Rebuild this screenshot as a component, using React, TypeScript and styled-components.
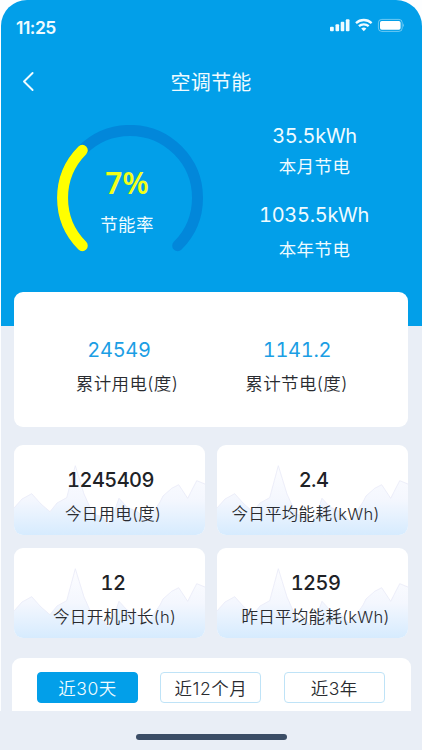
import React from "react";
import styled, { createGlobalStyle } from "styled-components";

const GlobalStyle = createGlobalStyle`
  *, *::before, *::after { box-sizing: border-box; }
  body { margin: 0; background: #fff; overflow: hidden; }
`;

const Screen = styled.div`
  width: 422px;
  height: 750px;
  overflow: hidden;
  display: flex;
  flex-direction: column;
  background: #fdfeff;
  font-family: Inter, "Noto Sans CJK SC", sans-serif;
`;

const Content = styled.main`
  height: 711px;
  margin-left: 1px;
  padding: 0 14px 0 13px;
  overflow: hidden;
  border-radius: 26px 26px 0 0;
  background: linear-gradient(#029fe9 326px, #e9eef6 326px);
`;

const StatusBar = styled.div`
  height: 52px;
  padding: 17px 4px 0 2px;
  display: flex;
  justify-content: space-between;
`;

const Clock = styled.span`
  font: 600 17.5px/21px Inter, sans-serif;
  letter-spacing: -0.5px;
  color: #effbff;
`;

const StatusIcons = styled.svg`
  display: block;
  width: 76px;
  height: 16px;
`;

const NavBar = styled.header`
  height: 60px;
  display: grid;
  grid-template-columns: 28px 1fr 28px;
  align-items: center;
`;

const BackButton = styled.button`
  width: 28px;
  height: 28px;
  padding: 0;
  border: 0;
  background: none;
`;

const Title = styled.h1`
  margin: 2px 0 0;
  text-align: center;
  font-size: 20px;
  line-height: 28px;
  font-weight: 400;
  letter-spacing: 0.3px;
  color: #effbff;
`;

const Hero = styled.section`
  height: 180px;
  display: flex;
`;

const Gauge = styled.div`
  display: grid;
  width: 146px;
  height: 146px;
  margin: 13px 0 0 43px;
  > * { grid-area: 1 / 1; }
`;

const GaugeText = styled.div`
  display: flex;
  flex-direction: column;
  align-items: center;
  padding: 38px 6px 0 0;
`;

const Percent = styled.strong`
  font: 600 30px/40px "Noto Sans", sans-serif;
  color: #f2ff18;
`;

const Savings = styled.div`
  display: flex;
  flex-direction: column;
  align-items: center;
  width: 150px;
  margin-left: 36px;
  padding-top: 10px;
`;

const Caption = styled.span<{ $size?: number; $light?: boolean; $gap?: number; $spacing?: number; $shift?: number }>`
  display: block;
  margin-top: ${(p) => p.$gap ?? 0}px;
  margin-left: ${(p) => (p.$shift ?? 0) * 2}px;
  font-size: ${(p) => p.$size ?? 17.5}px;
  line-height: 26px;
  letter-spacing: ${(p) => p.$spacing ?? 0.4}px;
  color: ${(p) => (p.$light ? "#effbff" : "#292b30")};
  font-weight: ${(p) => (p.$light ? 400 : 350)};
  white-space: nowrap;
`;

const Value = styled.span<{ $color?: string; $strong?: boolean; $gap?: number; $shift?: number }>`
  display: block;
  margin-top: ${(p) => p.$gap ?? 0}px;
  margin-left: ${(p) => (p.$shift ?? 0) * 2}px;
  font-size: 20px;
  line-height: 26px;
  letter-spacing: ${(p) => (p.$strong ? -0.55 : -0.3)}px;
  font-variant-numeric: tabular-nums;
  font-weight: ${(p) => (p.$strong ? 500 : 400)};
  color: ${(p) => p.$color ?? "#202226"};
  white-space: nowrap;
`;

const TotalsCard = styled.section`
  height: 135px;
  padding: 45px 28px 0 20px;
  display: grid;
  grid-template-columns: 1fr 1fr;
  border-radius: 9px;
  background: #fff;
`;

const Stat = styled.div`
  display: flex;
  flex-direction: column;
  align-items: center;
`;

const MetricGrid = styled.section`
  display: grid;
  grid-template-columns: 191px 191px;
  grid-auto-rows: 90px;
  gap: 13px 12px;
  margin-top: 18px;
`;

const MetricCard = styled.article`
  display: grid;
  overflow: hidden;
  border-radius: 9px;
  background: #fff;
  > * { grid-area: 1 / 1; }
`;

const MetricText = styled(Stat)`
  padding-top: 22px;
`;

const RangePanel = styled.nav`
  display: grid;
  grid-template-columns: repeat(3, 101px);
  gap: 22.4px;
  height: 60px;
  margin: 20px -3px 0 -2px;
  padding: 14px 0 0 25px;
  border-radius: 9px 9px 0 0;
  background: #fff;
`;

const RangeButton = styled.button<{ $active?: boolean }>`
  height: 31px;
  padding: 2px 0 0;
  border: 1px solid ${(p) => (p.$active ? "#029fe9" : "#bfe3f7")};
  border-radius: 4px;
  background: ${(p) => (p.$active ? "#029fe9" : "#fff")};
  color: ${(p) => (p.$active ? "#effbff" : "#292b30")};
  font: 350 17.5px/26px Inter, "Noto Sans CJK SC", sans-serif;
  letter-spacing: 0.5px;
  white-space: nowrap;
`;

const HomeArea = styled.footer`
  flex: 1;
  display: flex;
  justify-content: center;
  padding-top: 23px;
  background: #e9eef6;
`;

const HomeIndicator = styled.div`
  width: 151px;
  height: 6px;
  border-radius: 3px;
  background: #3b4d66;
`;

const WAVE =
  "M0 63 L8 54 L17.7 48.7 L27 59 L36 66.7 L43 58 L52.7 52.7 L61.3 20.7 L70 49 L79 69 L89 72 L94 79 L99 70 L105 53.3 L113 62 L124 67 L133 76 L146 57 L149 51 L157.7 43.3 L164.7 39.7 L173.7 53.3 L182.7 35.7 L191 39";

function Wave({ id }: { id: string }) {
  return (
    <svg width="191" height="90" aria-hidden="true">
      <defs>
        <linearGradient id={id} x1="0" y1="20" x2="0" y2="90" gradientUnits="userSpaceOnUse">
          <stop offset="0" stopColor="#fdfdff" />
          <stop offset="0.5" stopColor="#f4f7fe" />
          <stop offset="1" stopColor="#d6ebfe" />
        </linearGradient>
      </defs>
      <path d={`${WAVE} V90 H0 Z`} fill={`url(#${id})`} />
      <path d={WAVE} fill="none" stroke="#e8eaf7" strokeWidth="0.8" />
    </svg>
  );
}

const METRICS = [
  { id: "today", value: "1245409", label: "今日用电(度)", valueShift: 1, labelShift: 3.5 },
  { id: "average", value: "2.4", label: "今日平均能耗(kWh)", valueShift: 1, labelShift: -7 },
  { id: "hours", value: "12", label: "今日开机时长(h)", valueShift: 3.5, labelShift: 5 },
  { id: "yesterday", value: "1259", label: "昨日平均能耗(kWh)", valueShift: 3, labelShift: 3 },
];

const PALE = "#effbff";

export default function App() {
  return (
    <Screen>
      <GlobalStyle />
      <Content>
        <StatusBar>
          <Clock>11:25</Clock>
          <StatusIcons viewBox="0 0 76 16" fill="none">
            <g fill={PALE}>
              <rect x="2" y="9.7" width="3.8" height="4.5" rx="1" />
              <rect x="7.5" y="7.2" width="3.6" height="7" rx="1" />
              <rect x="12.7" y="4.8" width="3.6" height="9.4" rx="1" />
              <rect x="17.8" y="2.2" width="3.7" height="12" rx="1" />
            </g>
            <g stroke={PALE} strokeWidth="2.3">
              <path d="M28 6.1a11.4 11.4 0 0 1 15.6 0" />
              <path d="M30.9 9.2a7.2 7.2 0 0 1 9.8 0" />
            </g>
            <path d="M33.2 11.6a3.9 3.9 0 0 1 5.2 0L35.8 14.3Z" fill={PALE} />
            <rect x="50.4" y="2.4" width="23.8" height="12" rx="3.3" stroke={PALE} strokeOpacity="0.45" />
            <rect x="52" y="4" width="20.6" height="8.7" rx="1.8" fill="#fff" />
            <path d="M75 6.3q1.4 2 0 4z" fill={PALE} opacity="0.55" />
          </StatusIcons>
        </StatusBar>
        <NavBar>
          <BackButton aria-label="返回">
            <svg width="28" height="28" fill="none" stroke={PALE} strokeWidth="1.9" strokeLinecap="round" strokeLinejoin="round">
              <path d="M18.6 5 10 13.5l8.6 8.5" />
            </svg>
          </BackButton>
          <Title>空调节能</Title>
        </NavBar>
        <Hero>
          <Gauge>
            <svg width="146" height="146" fill="none" strokeWidth="11" strokeLinecap="round">
              <path d="M25.3 120.7A67.5 67.5 0 1 1 120.7 120.7" stroke="#0287da" />
              <path d="M25.3 120.7A67.5 67.5 0 0 1 25.3 25.3" stroke="#ff0" />
            </svg>
            <GaugeText>
              <Percent>7%</Percent>
              <Caption $light $gap={9}>节能率</Caption>
            </GaugeText>
          </Gauge>
          <Savings>
            <Value $color={PALE} $gap={1} $shift={0.5}>35.5kWh</Value>
            <Caption $light $gap={5} $shift={0.5}>本月节电</Caption>
            <Value $color={PALE} $gap={22}>1035.5kWh</Value>
            <Caption $light $gap={9} $shift={0.5}>本年节电</Caption>
          </Savings>
        </Hero>
        <TotalsCard>
          <Stat>
            <Value $color="#1b9ee4" $shift={-1.5}>24549</Value>
            <Caption $gap={8} $shift={6.5}>累计用电(度)</Caption>
          </Stat>
          <Stat>
            <Value $color="#1b9ee4" $shift={3.5}>1141.2</Value>
            <Caption $gap={8} $shift={3}>累计节电(度)</Caption>
          </Stat>
        </TotalsCard>
        <MetricGrid>
          {METRICS.map((m) => (
            <MetricCard key={m.id}>
              <Wave id={m.id} />
              <MetricText>
                <Value $strong $shift={m.valueShift}>{m.value}</Value>
                <Caption $size={16.5} $spacing={0.3} $gap={8} $shift={m.labelShift}>{m.label}</Caption>
              </MetricText>
            </MetricCard>
          ))}
        </MetricGrid>
        <RangePanel>
          <RangeButton $active>近30天</RangeButton>
          <RangeButton>近12个月</RangeButton>
          <RangeButton>近3年</RangeButton>
        </RangePanel>
      </Content>
      <HomeArea>
        <HomeIndicator />
      </HomeArea>
    </Screen>
  );
}
